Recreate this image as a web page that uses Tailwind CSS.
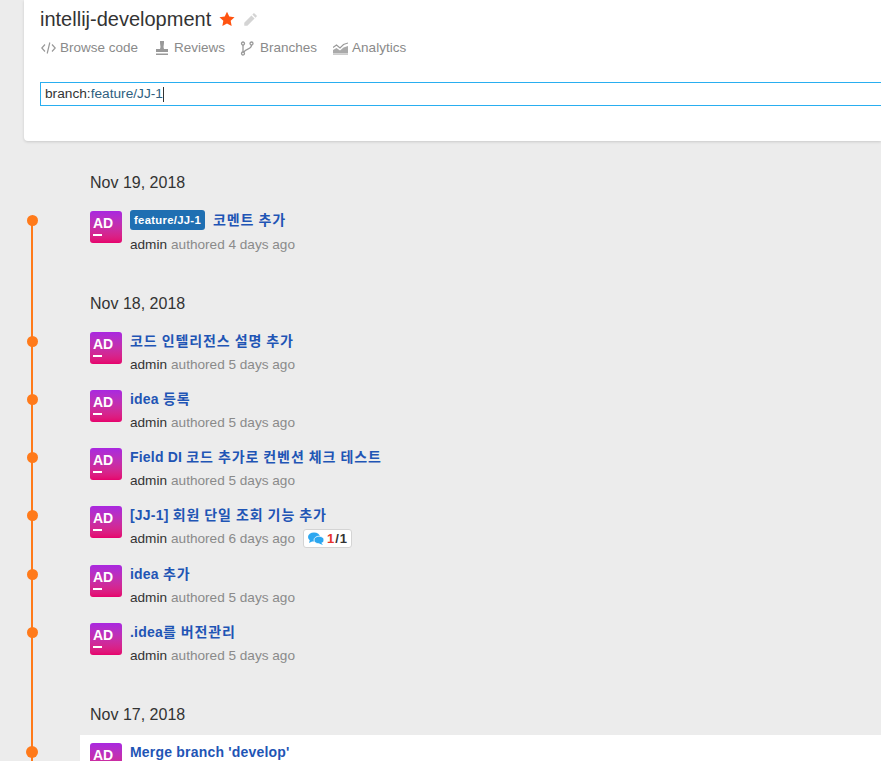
<!DOCTYPE html>
<html lang="ko">
<head>
    <meta charset="UTF-8">
    <title>intellij-development</title>
    <script src="https://cdn.jsdelivr.net/npm/@tailwindcss/browser@4"></script>
</head>
<body class="bg-[#ececec] h-[761px] overflow-hidden font-['Liberation_Sans','Noto_Sans_CJK_KR',sans-serif]">
    <div class="relative h-[761px] overflow-hidden">
        <!-- Timeline line -->
        <div class="absolute left-[31px] top-[220px] h-[541px] w-[2px] bg-[#ff7a1a]"></div>

        <!-- Header -->
        <header class="ml-6 h-[141px] bg-white rounded-bl shadow-[0_1px_3px_rgba(0,0,0,0.15)] pl-4 pt-[5px]">
            <div class="flex items-center h-[28px]">
                <h1 class="text-[20px] text-[#333]">intellij-development</h1>
                <svg class="ml-2 w-[16px] h-[16px]" viewBox="0 0 24 24" fill="#ff5310"><path d="M12 1l3.400 7.300 7.900 1-5.800 5.400 1.500 7.900L12 18.700l-7 3.900 1.500-7.900L.7 9.300l7.900-1z"/></svg>
                <svg class="ml-[8px] w-[15px] h-[15px]" viewBox="0 0 24 24" fill="#d4d4d4"><path d="M17.500 1.500l5 5L20 9l-5-5zM13.500 5.500l5 5L7 22H2v-5z"/></svg>
            </div>
            <nav class="flex items-center mt-[7px] h-[16px] text-[13.500px] text-[#8a8a8a] ml-px">
                <svg class="w-[15px] h-[14px] mr-[4px]" viewBox="0 0 15 14" fill="none" stroke="#999" stroke-width="1.200"><path d="M4 3.500L.8 7 4 10.500M11 3.500L14.200 7 11 10.500M8.800 1.500L6.200 12.500"/></svg>
                <span class="mr-[17px]">Browse code</span>
                <svg class="w-[14px] h-[15px] mr-[5px]" viewBox="0 0 14 15" fill="#999"><path d="M5 0h4v2L8.500 6l.5 2h4v3H1V8h4l.5-2L5 2zM1 12.500h12V14H1z"/></svg>
                <span class="mr-[15px]">Reviews</span>
                <svg class="w-[14px] h-[15px] mr-[6px]" viewBox="0 0 14 15" fill="none" stroke="#999" stroke-width="1.300"><circle cx="3" cy="2.500" r="1.500"/><circle cx="11.500" cy="2.500" r="1.500"/><circle cx="3" cy="12.500" r="1.500"/><path d="M3 4v7M11.500 4c0 5-6 3-7.500 7"/></svg>
                <span class="mr-[16px]">Branches</span>
                <svg class="w-[15px] h-[13px] mr-[4px]" viewBox="0 0 15 13" fill="none"><path d="M0 12.500h15v.5H0z" fill="#999"/><path d="M0 11.500V8l3.500-2 3.500 2.500 3.500-3L15 4v7.500z" fill="#aaa"/><path d="M0 5.500L3.500 3 7 6l3.500-3.500L15 1" stroke="#999" stroke-width="1.100"/></svg>
                <span>Analytics</span>
            </nav>
            <div class="mt-[26px] -mr-1 h-[24px] border border-[#29aef0] flex items-center pl-1 text-[13.700px] text-[#333]">
                <span>branch:</span><span class="text-[#2f5f7f]">feature/JJ-1</span><span class="w-px h-[15px] bg-[#333]"></span>
            </div>
        </header>

        <main id="log"></main>
    </div>

    <script>
        const sections = [
            { date: 'Nov 19, 2018', top: 'pt-[30px]', commits: [
                { branch: 'feature/JJ-1', title: '코멘트 추가', age: '4 days ago', subClass: 'mt-[7px]' }
            ]},
            { date: 'Nov 18, 2018', top: 'pt-[30px]', commits: [
                { title: '코드 인텔리전스 설명 추가', age: '5 days ago' },
                { title: 'idea 등록', age: '5 days ago' },
                { title: 'Field DI 코드 추가로 컨벤션 체크 테스트', age: '5 days ago' },
                { title: '[JJ-1] 회원 단일 조회 기능 추가', age: '6 days ago', comments: true, subClass: 'mt-[5px] mb-px' },
                { title: 'idea 추가', age: '5 days ago' },
                { title: '.idea를 버전관리', age: '5 days ago' }
            ]},
            { date: 'Nov 17, 2018', top: 'pt-[30px]', commits: [
                { title: "Merge branch 'develop'", age: '5 days ago', active: true }
            ]}
        ];

        // Hangul runs sit wider in the original than Latin ones
        function spacedTitle(title) {
            return title.replace(/[가-힣]+/g, m => `<span class="tracking-[0.9px]">${m}</span>`);
        }

        function commitRow(c) {
            const rowBg = c.active ? 'bg-white' : '';
            const subClass = c.subClass || 'mt-[6px]';
            const dot = c.active
                ? '<span class="absolute left-[26px] top-[11px] w-[12px] h-[12px] rounded-full bg-[#ff7a1a]"></span>'
                : '<span class="absolute left-[26.500px] top-[12px] w-[11px] h-[11px] rounded-full bg-[#ff7a1a]"></span>';
            const branch = c.branch
                ? `<span class="bg-[#1f6fb2] text-white text-[11.300px] tracking-[0.3px] font-bold rounded-[3px] h-[20px] px-1 flex items-center mr-2">${c.branch}</span>`
                : '';
            const comments = c.comments
                ? `<span class="ml-2 flex items-center h-[19px] px-[4px] bg-white border border-[#d4d4d4] rounded-[3px] text-[13px] font-bold text-[#333]">
                       <svg class="w-[16px] h-[13px] mr-[3px]" viewBox="0 0 16 13" fill="#2ca7f0"><ellipse cx="6" cy="5" rx="6" ry="4.500"/><path d="M2 7.500L1 11l4-2z"/><ellipse cx="11" cy="8" rx="5" ry="3.800" stroke="#fff" stroke-width="0.800"/><path d="M13 10.500l2 2.500-4-1.500z"/></svg>
                       <span class="text-[#e8332a]">1</span><span class="mx-px">/</span>1
                   </span>`
                : '';
            return `
                <div class="relative">
                    ${dot}
                    <div class="ml-20 pl-[10px] py-2 min-h-[58px] flex ${rowBg}">
                        <div class="w-8 h-8 rounded-[3px] bg-gradient-to-b from-[#a927e0] to-[#e6006d] text-white font-bold text-[14px] leading-none pl-[3px] pt-[5px] shrink-0">
                            AD
                            <div class="w-[9px] h-[2px] bg-white mt-[4px]"></div>
                        </div>
                        <div class="ml-2">
                            <div class="flex items-center h-[18px] text-[14px] leading-[18px] font-bold text-[#1f55b5] tracking-[0.2px]">${branch}<span>${spacedTitle(c.title)}</span></div>
                            <div class="flex items-center ${subClass} min-h-[18px] leading-[18px] text-[13.600px]">
                                <span class="text-[#333]">admin</span>
                                <span class="text-[#8a8a8a] ml-1">authored ${c.age}</span>
                                ${comments}
                            </div>
                        </div>
                    </div>
                </div>`;
        }

        function renderSection(s) {
            return `
                <section class="${s.top}">
                    <div class="ml-[90px] h-[24px] leading-[24px] text-[16px] text-[#333] mb-[8px]">${s.date}</div>
                    ${s.commits.map(commitRow).join('')}
                </section>`;
        }

        document.getElementById('log').innerHTML = sections.map(renderSection).join('');
    </script>
</body>
</html>
